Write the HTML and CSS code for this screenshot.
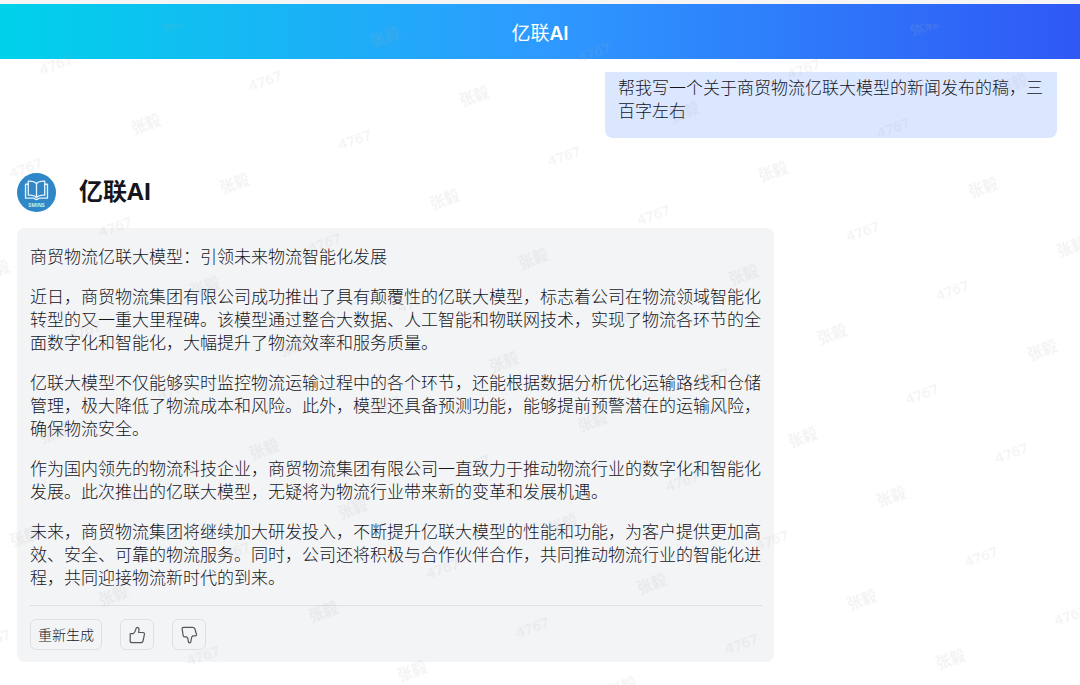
FILE: index.html
```html
<!DOCTYPE html>
<html lang="zh-CN">
  <head>
    <meta charset="UTF-8" />
    <meta name="viewport" content="width=device-width, initial-scale=1" />
    <title>亿联AI</title>
    <link rel="stylesheet" href="styles.css" />
  </head>

  <body>
    <header class="header">亿联<b>AI</b></header>

    <main class="chat">
      <div class="question">帮我写一个关于商贸物流亿联大模型的新闻发布的稿，三百字左右</div>

      <div class="author">
        <svg class="avatar" viewBox="0 0 38 38" aria-hidden="true">
          <circle cx="19" cy="19" r="19" fill="#2f87c7" />
          <g fill="none" stroke="#e4f3fc" stroke-width="1.3" stroke-linejoin="round" stroke-linecap="round">
            <path d="M19 10.5C17.5 8.6 14.5 7.8 11 8V21.6C14.5 21.4 17.5 22.2 19 24C20.5 22.2 23.5 21.4 27 21.6V8C23.5 7.8 20.5 8.6 19 10.5Z" />
            <path d="M19 10.5V24" />
            <path d="M11 11H8.3V24.5H16C17 24.5 17.5 26 19 26S21 24.5 22 24.5H29.7V11H27" />
          </g>
          <text class="avatarText" x="19" y="33" text-anchor="middle">SMINS</text>
        </svg>
        <h1 class="authorName">亿联AI</h1>
      </div>

      <div class="answer">
        <p>商贸物流亿联大模型：引领未来物流智能化发展</p>
        <p>近日，商贸物流集团有限公司成功推出了具有颠覆性的亿联大模型，标志着公司在物流领域智能化转型的又一重大里程碑。该模型通过整合大数据、人工智能和物联网技术，实现了物流各环节的全面数字化和智能化，大幅提升了物流效率和服务质量。</p>
        <p>亿联大模型不仅能够实时监控物流运输过程中的各个环节，还能根据数据分析优化运输路线和仓储管理，极大降低了物流成本和风险。此外，模型还具备预测功能，能够提前预警潜在的运输风险，确保物流安全。</p>
        <p>作为国内领先的物流科技企业，商贸物流集团有限公司一直致力于推动物流行业的数字化和智能化发展。此次推出的亿联大模型，无疑将为物流行业带来新的变革和发展机遇。</p>
        <p>未来，商贸物流集团将继续加大研发投入，不断提升亿联大模型的性能和功能，为客户提供更加高效、安全、可靠的物流服务。同时，公司还将积极与合作伙伴合作，共同推动物流行业的智能化进程，共同迎接物流新时代的到来。</p>

        <div class="actions">
          <button class="btn" type="button">重新生成</button>
          <button class="btn btnIcon" type="button" aria-label="赞">
            <svg viewBox="0 0 18 18" aria-hidden="true">
              <path d="M2.2 8.2Q2.2 7.6 2.8 7.6H5.2C6.5 6.9 7.3 5.6 7.7 3.6C7.9 2.3 8.3 1.4 9.2 1.4C10.3 1.4 11 2.3 11 3.6C11 4.7 10.8 5.6 10.6 6.5H15Q16.7 6.6 16.4 8.4L15.2 14.3Q14.7 16.7 12.5 16.7H4Q2.2 16.7 2.2 15Z" />
            </svg>
          </button>
          <button class="btn btnIcon" type="button" aria-label="踩">
            <svg viewBox="0 0 18 18" aria-hidden="true">
              <path d="M2.2 3.1Q1.9 1.3 3.7 1.3H12.6Q14.3 1.3 14.9 3L16.5 8.2Q16.9 9.9 15.2 9.9H12.9C11.8 10.5 11.3 11.6 11.2 13.5C11.1 15.3 10.8 16.8 9.7 16.8C8.4 16.8 8.2 15.5 8.2 14.2C8.2 12.5 7.6 11.6 6.6 10.9H4.6Q3.3 10.8 3.1 9.4Z" />
            </svg>
          </button>
        </div>
      </div>
    </main>

    <!-- 水印 -->
    <svg class="watermark" aria-hidden="true">
      <defs>
        <pattern id="mark" width="255" height="173" patternUnits="userSpaceOnUse" patternTransform="translate(265 56) rotate(-20) translate(-30 -30)">
          <text x="30" y="36">4767</text>
          <text x="158" y="36">张毅</text>
          <text x="94" y="122">4767</text>
          <text x="221" y="122">张毅</text>
        </pattern>
      </defs>
      <rect width="100%" height="100%" fill="url(#mark)" />
    </svg>
  </body>
</html>
```
FILE: styles.css
```css
* {
  box-sizing: border-box;
}

body {
  margin: 0;
  color: #15161c;
  background: #ffffff;
  border-top: 4px solid #f5f5f5;
  font-family: "Open Sans", "Noto Sans CJK SC", sans-serif;
  font-size: 17px;
  line-height: 23px;
}

.header {
  height: 55px;
  line-height: 60px;
  text-align: center;
  color: #ffffff;
  font-family: Inter, "Noto Sans CJK SC", sans-serif;
  font-size: 19px;
  font-weight: 400;
  background: linear-gradient(90deg, #00d2ea, #2e9aff 50%, #2f58f5);
}

.header b {
  font-weight: 600;
}

.chat {
  display: flex;
  flex-direction: column;
  padding: 13px 23px 24px 17px;
}

.question {
  align-self: flex-end;
  max-width: 452px;
  padding: 4px 13px 16px;
  font-weight: 300;
  background: #dbe7ff;
  border-radius: 0 0 8px 8px;
}

.author {
  display: flex;
  align-items: center;
  gap: 23px;
  margin: 35px 0 16px;
}

.avatar {
  width: 39px;
  height: 39px;
}

.avatarText {
  fill: #d5efe0;
  font-size: 5px;
  font-weight: 700;
}

.authorName {
  margin: 0;
  padding-bottom: 3px;
  font-size: 24px;
  line-height: 36px;
  font-weight: 700;
}

.answer {
  width: 757px;
  max-width: 100%;
  padding: 17px 12px 12px 13px;
  font-weight: 300;
  background: #f3f4f6;
  border-radius: 8px;
}

.answer p {
  margin: 0 0 17px;
}

.answer p:last-of-type {
  margin-bottom: 16px;
}

.actions {
  display: flex;
  gap: 18px;
  padding-top: 13px;
  border-top: 1px solid #dfe0e3;
}

.btn {
  height: 31px;
  padding: 0 7px;
  color: inherit;
  font-family: inherit;
  font-size: 14px;
  font-weight: inherit;
  line-height: 27px;
  background: transparent;
  border: 1px solid #dfe0e4;
  border-radius: 6px;
  cursor: pointer;
}

.btnIcon {
  display: flex;
  align-items: center;
  justify-content: center;
  width: 34px;
  padding: 0;
}

.btnIcon svg {
  width: 18px;
  height: 18px;
  fill: none;
  stroke: #55565c;
  stroke-width: 1.2;
  stroke-linejoin: round;
}

/* 水印盖在所有内容上面 */
.watermark {
  position: fixed;
  top: 24px;
  left: 0;
  width: 100%;
  height: calc(100% - 24px);
  pointer-events: none;
}

.watermark text {
  fill: rgba(175, 175, 175, 0.15);
  font-size: 15px;
  font-weight: 600;
  text-anchor: middle;
}
```
